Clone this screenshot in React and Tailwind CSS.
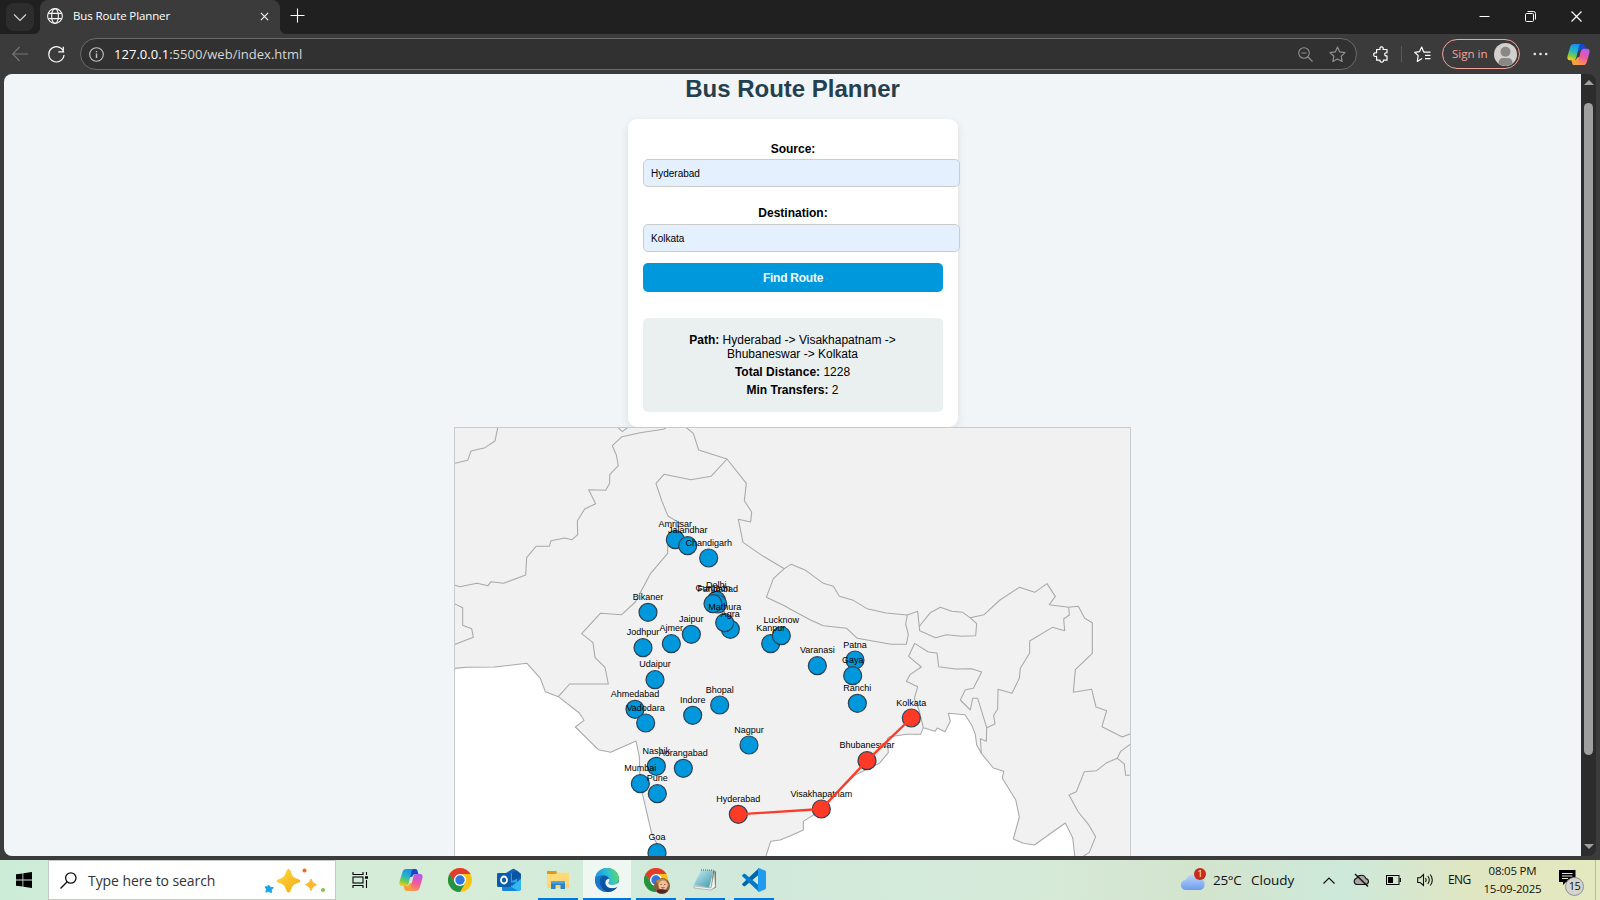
import React from "react";

const UI = "font-['Open_Sans','Noto_Sans',sans-serif]";

/* Map coordinates are in thirds of a pixel. */
const CITIES = [
  ["Amritsar", 676, -271], ["Jalandhar", 713, -253], ["Chandigarh", 776, -216],
  ["Delhi", 799, -89], ["Faridabad", 803, -78], ["Gurgaon", 789, -79],
  ["Bikaner", 594, -53], ["Agra", 841, -2], ["Mathura", 824, -22], ["Jaipur", 724, 13],
  ["Jodhpur", 579, 53], ["Ajmer", 664, 41], ["Kanpur", 962, 41], ["Lucknow", 994, 17],
  ["Udaipur", 615, 149], ["Ahmedabad", 555, 238], ["Vadodara", 587, 279],
  ["Indore", 728, 256], ["Bhopal", 809, 225], ["Nagpur", 897, 345],
  ["Nashik", 619, 409], ["Aurangabad", 700, 415], ["Mumbai", 571, 461],
  ["Pune", 622, 491], ["Goa", 621, 668], ["Varanasi", 1102, 107],
  ["Patna", 1215, 90], ["Gaya", 1208, 137], ["Ranchi", 1222, 220],
  ["Hyderabad", 865, 553, true], ["Visakhapatnam", 1114, 537, true],
  ["Bhubaneswar", 1251, 392, true], ["Kolkata", 1384, 264, true],
];

const NORTH_WEST = [
  "143,24 135,63 105,83 63,93 53,121 15,130",
  "503,22 517,35 534,22",
  "650,22 640,28 570,38 516,50 487,77 499,105 505,137 479,164 479,190 467,211 416,209 437,251 404,267 382,303 383,344 366,359 344,354 303,362 298,379 258,379 230,413 227,465 161,490 123,485 114,497 81,490 29,500 13,495",
  "708,22 730,40 746,90 831,117 889,190 883,242 905,276 902,306 865,298 879,367 940,409 1003,446 1023,433 1067,451 1120,490 1150,499 1168,529 1210,541 1251,566 1309,579 1372,585 1367,612 1375,644 1369,673 1323,673 1222,655 1190,625 1120,617 1080,599 1020,567 1005,558 949,532 970,476 1003,446",
  "831,117 783,169 723,179 642,163 618,190 635,242 654,288 690,310 660,350 653,375 653,400 602,460 556,546 515,584 451,580 395,641 429,668 435,712 465,742 475,792 359,792 325,830",
  "13,551 38,563 38,616 65,626 70,652 13,674",
];

const NORTH_EAST = [
  "352,585 383,574 389,632 437,653 470,644 515,649 557,647 560,611 540,593 518,577 485,574 451,562 421,578 389,618",
  "540,593 582,584 630,540 688,502 734,517 771,491 796,529 778,554 836,562 865,559 884,595 907,608 907,700 856,749 850,817 905,808 918,861 950,872 936,920 997,951 1024,940",
  "836,562 838,585 821,597 824,632 787,622 719,663 719,699 691,745 688,775 666,820 624,808 623,867 611,886 615,912 590,923 563,835 548,835 541,870 511,840 526,809 550,805 575,756 545,746 497,747 446,740 441,699 415,696 374,670 356,709 394,741 361,763 349,784 383,800 373,835 388,873 400,923",
  "590,923 589,964 571,956 574,1000",
  "1024,970 992,994 982,1015 1003,1032 1007,1066 1024,1066",
  "982,1015 950,1028 920,1052 883,1055 859,1115 837,1125 865,1176 895,1213 917,1250 898,1297 875,1312",
];

const WEST_SEA =
  "M5,116 L50,112 133,111 231,100 271,145 286,185 325,200 388,249 402,271 376,291 445,359 482,367 558,333 568,380 570,450 577,490 605,610 625,650 630,700 5,700 Z";
const EAST_SEA =
  "M-79,700 L-72,678 -58,634 -30,630 0,618 40,600 40,574 94,540 140,490 194,436 268,400 295,368 292,325 299,320 350,313 392,313 400,293 435,304 442,294 465,305 481,274 475,250 525,254 545,285 556,313 560,345 574,370 610,414 641,424 637,445 677,509 688,561 670,627 700,640 733,645 826,579 848,623 857,700 Z";

function RouteMap() {
  return (
    <svg className="block h-[429px] w-[675px]" viewBox="0 0 2025 1287">
      <rect width="2025" height="1287" fill="#f1f1f1" />
      <g fill="none" stroke="#a9a9a9" strokeWidth="3.2" strokeLinejoin="round">
        <path d={WEST_SEA} fill="#fff" transform="translate(-15 606)" />
        <path d={EAST_SEA} fill="#fff" transform="translate(1005 606)" />
        <g transform="translate(-15 -24)">
          {NORTH_WEST.map((p) => <polyline key={p} points={p} />)}
        </g>
        <g transform="translate(1005 -24)">
          {NORTH_EAST.map((p) => <polyline key={p} points={p} />)}
        </g>
      </g>
      <g transform="translate(-15 606)">
        {CITIES.map(([name, x, y, hit]) => (
          <circle key={name} cx={x} cy={y} r="27" fill={hit ? "#ff3b27" : "#0098dc"} stroke="#2c4356" strokeWidth="3.6" />
        ))}
        {CITIES.map(([name, x, y]) => (
          <text key={name} x={x} y={y - 37} fontSize="27" textAnchor="middle" fill="#000" className="font-['Liberation_Sans',Arial,sans-serif]">
            {name}
          </text>
        ))}
        <polyline points="865,553 1114,537 1251,392 1384,264" fill="none" stroke="#ff3b27" strokeWidth="7" />
      </g>
    </svg>
  );
}

function Copilot({ className, id }) {
  return (
    <svg className={className} viewBox="0 0 24 24">
      <defs>
        <linearGradient id={id + "a"} x1="0.6" y1="0" x2="0.3" y2="1">
          <stop offset="0" stopColor="#1b8df0" /><stop offset="0.45" stopColor="#25b7c4" />
          <stop offset="0.75" stopColor="#7cc84a" /><stop offset="1" stopColor="#f6cf1e" />
        </linearGradient>
        <linearGradient id={id + "b"} x1="0.6" y1="0" x2="0.3" y2="1">
          <stop offset="0" stopColor="#b45cf0" /><stop offset="0.5" stopColor="#f2589a" />
          <stop offset="1" stopColor="#ff9a4d" />
        </linearGradient>
      </defs>
      <path d="M11 1h5.200c1.400 0 2 .8 2.400 2l.9 3.300h-3.200c-1.600 0-2.300.8-2.800 2.300l-3 1z" fill="#1648c8" />
      <path d="M13 23H7.800c-1.400 0-2-.8-2.400-2l-.9-3.300h3.200c1.600 0 2.300-.8 2.800-2.300l3-1z" fill="#f9a03c" />
      <path d="M7.500 1H15c-1.500 0-2.100 1.200-2.500 2.600L9.800 14.800C9.200 17 8.200 18 6.400 18H3c-2.500 0-3-2-2.400-4.500L3.400 4C4 2 5.200 1 7.500 1z" fill={`url(#${id}a)`} />
      <path d="M16.500 23H9c1.500 0 2.100-1.200 2.500-2.600l2.700-11.200C14.800 7 15.800 6 17.600 6H21c2.500 0 3 2 2.400 4.500L20.600 20c-.6 2-1.800 3-4.100 3z" fill={`url(#${id}b)`} />
    </svg>
  );
}

function Chrome({ className }) {
  return (
    <svg className={className} viewBox="0 0 24 24">
      <circle cx="12" cy="12" r="12" fill="#fbc116" />
      <path d="M1.600 6A12 12 0 0 1 22.400 6H12z" fill="#e33b2e" />
      <path d="M1.600 6A12 12 0 0 0 12 24l5.200-9H6.800z" fill="#229342" />
      <path d="M1.600 6L6.800 15 12 12V6z" fill="#229342" />
      <path d="M1.600 6L3 4.500h18L22.400 6H12a6 6 0 0 0-5.500 4L6 13z" fill="#e33b2e" />
      <circle cx="12" cy="12" r="6" fill="#fff" />
      <circle cx="12" cy="12" r="4.700" fill="#2f76e4" />
    </svg>
  );
}

function TabStrip() {
  return (
    <div className="flex h-[34px] shrink-0 bg-[#202020] text-white">
      <div className="ml-1.5 mt-[3px] flex h-7 w-7 items-center justify-center rounded-lg bg-[#2d2d2d]">
        <svg className="h-3.5 w-3.5" viewBox="0 0 14 14" fill="none" stroke="#d8d8d8" strokeWidth="1.1"><path d="M1 4.500l6 6 6-6" /></svg>
      </div>
      <div className="flex w-[6px] items-end">
        <svg className="h-1.5 w-1.5" viewBox="0 0 6 6"><path d="M0 6A6 6 0 0 0 6 0V6z" fill="#3b3b3b" /></svg>
      </div>
      <div className="flex w-[240px] items-center rounded-t-lg bg-[#3b3b3b] pb-[2px] pl-[7px]">
        <svg className="h-4 w-4" viewBox="0 0 16 16" fill="none" stroke="#f5f5f5" strokeWidth="1.1">
          <circle cx="8" cy="8" r="7.400" /><ellipse cx="8" cy="8" rx="3.400" ry="7.400" /><path d="M1.300 5.400h13.400M1.300 10.600h13.400" />
        </svg>
        <span className={`${UI} ml-[10px] w-[180px] whitespace-nowrap text-[11.500px] tracking-[-0.120px]`}>Bus Route Planner</span>
        <svg className="ml-[7px] h-[9px] w-[9px]" viewBox="0 0 10 10" fill="none" stroke="#f0f0f0" strokeWidth="1.300"><path d="M1 1l8 8M9 1L1 9" /></svg>
      </div>
      <div className="flex w-[10px] items-end">
        <svg className="h-1.5 w-1.5" viewBox="0 0 6 6"><path d="M6 6A6 6 0 0 1 0 0V6z" fill="#3b3b3b" /></svg>
      </div>
      <svg className="mt-2 h-[15px] w-[15px]" viewBox="0 0 15 15" fill="none" stroke="#fff" strokeWidth="1.100"><path d="M7.500 .5v14M.5 7.500h14" /></svg>
      <div className="ml-auto flex items-center pb-px pr-[18px]">
        <svg className="h-[11px] w-[11px]" viewBox="0 0 11 11"><path d="M.5 5.500h10" stroke="#fff" /></svg>
        <svg className="ml-[35px] h-[11px] w-[11px]" viewBox="0 0 11 11" fill="none" stroke="#fff"><rect x=".5" y="2.500" width="8" height="8" rx="1" /><path d="M2.500 .5h6q2 0 2 2v6" /></svg>
        <svg className="ml-[35px] h-[11px] w-[11px]" viewBox="0 0 11 11" stroke="#fff" strokeWidth="1.200"><path d="M.5 .5l10 10M10.500 .5l-10 10" /></svg>
      </div>
    </div>
  );
}

const STAR = "M8 1l2.100 4.600 5 .6-3.700 3.400 1 5L8 12.200l-4.400 2.400 1-5L.9 6.200l5-.6z";

function Toolbar() {
  return (
    <div className={`${UI} flex h-10 shrink-0 items-center bg-[#3b3b3b]`}>
      <svg className="ml-3 h-4 w-4" viewBox="0 0 16 16" fill="none" stroke="#777" strokeWidth="1.100"><path d="M16 8H.7M7.500 1L.7 8l6.800 7" /></svg>
      <svg className="ml-5 h-[17px] w-[17px]" viewBox="0 0 17 17" fill="none" stroke="#fff" strokeWidth="1.200"><path d="M15.800 6.500A7.600 7.600 0 1 0 16 9M15.300 .8v5h-5" /></svg>
      <div className="ml-[15px] flex h-8 w-[1277px] items-center rounded-full border border-[#6a6a6a] bg-[#313131]">
        <svg className="ml-2 h-[15px] w-[15px]" viewBox="0 0 15 15" fill="none" stroke="#c4c4c4" strokeWidth="1.100"><circle cx="7.500" cy="7.500" r="6.800" /><path d="M7.500 6.500v4.500M7.500 4v1.300" strokeWidth="1.400" /></svg>
        <span className="ml-[10px] whitespace-nowrap pt-px text-[13px] tracking-[0.030px] text-[#d6d6d6]"><span className="text-white">127.0.0.1</span>:5500/web/index.html</span>
        <svg className="ml-auto h-[15px] w-[15px]" viewBox="0 0 15 15" fill="none" stroke="#909090" strokeWidth="1.100"><circle cx="6" cy="6" r="5.300" /><path d="M10 10l4.500 4.500M3.500 6h5" /></svg>
        <svg className="ml-[16px] mr-[10px] h-[17px] w-[17px]" viewBox="0 0 16 16" fill="none" stroke="#909090" strokeWidth="1.100" strokeLinejoin="round"><path d={STAR} /></svg>
      </div>
      <svg className="ml-[16px] h-[17px] w-[17px]" viewBox="0 0 17 17" fill="none" stroke="#fff" strokeWidth="1.200" strokeLinejoin="round">
        <path d="M4 3.500h3q-.6-2.700 1.500-2.700t1.600 2.700H14v3.300q-2.300-.4-2.300 1.500T14 9.800v4.400h-3.600q.3 2-1.700 2t-1.700-2H3.600v-3.800q-2.900.5-2.900-1.700t2.900-1.900V3.500z" />
      </svg>
      <div className="ml-[11px] h-4 w-px bg-[#5a5a5a]" />
      <svg className="ml-[12px] h-[17px] w-[17px]" viewBox="0 0 17 17" fill="none" stroke="#fff" strokeWidth="1.200" strokeLinejoin="round"><path d="M9.500 6.200H16.500M11 9.400h5.500M11 12.600h5.500M10.500 5.800L9.600 5.700 7.700 1 5.400 5.700.7 6.300 4.200 9.600l-.9 5.800 4.800-2.800" /></svg>
      <div className="ml-[11px] flex h-[30px] w-[78px] items-center rounded-full border border-[#f5a39b] pl-[9px]">
        <span className="w-[37px] whitespace-nowrap text-[11.500px] text-[#f5a39b]">Sign in</span>
        <svg className="ml-[5px] h-[23px] w-[23px] shrink-0" viewBox="0 0 23 23"><circle cx="11.500" cy="11.500" r="11.500" fill="#d2d0ce" /><circle cx="11.500" cy="8.800" r="5" fill="#8a8886" /><path d="M4.500 20.500q0-5.500 5-5.500h4q5 0 5 5.500a11.500 11.500 0 0 1-14 0z" fill="#8a8886" /></svg>
      </div>
      <svg className="ml-[13px] h-3 w-[15px]" viewBox="0 0 15 12" fill="#e6e6e6"><circle cx="1.800" cy="6" r="1.300" /><circle cx="7.500" cy="6" r="1.300" /><circle cx="13.200" cy="6" r="1.300" /></svg>
      <Copilot id="tb" className="ml-[19px] h-[23px] w-[23px]" />
    </div>
  );
}

function Field({ label, value, className }) {
  return (
    <div className={className}>
      <div className="h-[14px] text-center font-bold leading-[14px]">{label}</div>
      <div className="flex h-7 w-[317px] items-center rounded-[5px] border border-[#ccc] bg-[#e4f0fe] px-[7px] pt-px text-[10px]">{value}</div>
    </div>
  );
}

function Page() {
  return (
    <div className="flex h-[782px] flex-1 flex-col items-center overflow-hidden rounded-l-lg bg-[#f1f5f8] pl-px font-['Liberation_Sans',Arial,sans-serif] text-[12px] leading-[14px] text-black">
      <h1 className="mr-px mt-px h-[28px] text-[24px] font-bold leading-[28px] text-[#24404f]">Bus Route Planner</h1>
      <div className="mt-4 h-[308px] w-[330px] shrink-0 rounded-[9px] bg-white px-[15px] shadow-[0_3px_8px_rgba(0,0,0,0.1)]">
        <Field label="Source:" value="Hyderabad" className="flex flex-col gap-[3px] pt-[23px]" />
        <Field label="Destination:" value="Kolkata" className="flex flex-col gap-[4px] pt-[19px]" />
        <div className="mt-[11px] flex h-[29px] items-center justify-center rounded-[5px] bg-[#0098dc] font-bold tracking-[-0.250px] text-[#f1f9fd]">Find Route</div>
        <div className="mt-[26px] h-[94px] rounded-[5px] bg-[#eaf0f0] pl-[15px] pr-[16px] pt-[15px] text-center">
          <p><b>Path:</b> Hyderabad -&gt; Visakhapatnam -&gt; Bhubaneswar -&gt; Kolkata</p>
          <p className="mt-[4px]"><b>Total Distance:</b> 1228</p>
          <p className="mt-[4px]"><b>Min Transfers:</b> 2</p>
        </div>
      </div>
      <div className="z-10 mr-px w-[677px] shrink-0 border border-b-0 border-[#c8cbcd]"><RouteMap /></div>
    </div>
  );
}

function Scrollbar() {
  return (
    <div className="flex h-[782px] w-[15px] flex-col items-center rounded-r-lg bg-[#2c2c2c]">
      <svg className="mt-[6px] h-[5px] w-[10px]" viewBox="0 0 10 5"><path d="M0 5L5 0l5 5z" fill="#a0a0a0" /></svg>
      <div className="mt-[18px] h-[652px] w-[9px] rounded-full bg-[#9f9f9f]" />
      <svg className="mb-[7px] mt-auto h-[5px] w-[10px]" viewBox="0 0 10 5"><path d="M0 0l5 5 5-5z" fill="#a0a0a0" /></svg>
    </div>
  );
}

function AppButton({ children, active, open, className = "" }) {
  return (
    <div className={`relative flex h-10 w-12 shrink-0 items-center justify-center ${active ? "bg-[#eff7f3]" : ""} ${className}`}>
      {children}
      {open && <div className={`absolute bottom-0 h-[2px] bg-[#0078d7] ${active ? "w-12" : "w-10"}`} />}
    </div>
  );
}

function Taskbar() {
  return (
    <div className={`${UI} flex h-10 shrink-0 items-center bg-[linear-gradient(90deg,#cdecd7_0%,#d6edd8_28%,#d0e9dc_45%,#d6ead8_65%,#d3e4cd_75%,#cde9da_84%,#e0e6c2_92%,#e5e9bf_100%)] text-[#111]`}>
      <svg className="ml-4 h-4 w-4" viewBox="0 0 16 16" fill="#000"><path d="M0 2.300l6.500-.9v6.200H0zM7.300 1.300L16 0v7.600H7.300zM0 8.400h6.500v6.200L0 13.700zM7.300 8.400H16V16l-8.700-1.200z" /></svg>
      <div className="ml-4 flex h-10 w-[288px] items-center border border-[#c4cbc6] bg-white">
        <svg className="ml-[11px] h-[17px] w-[17px]" viewBox="0 0 17 17" fill="none" stroke="#111" strokeWidth="1.300"><circle cx="10.800" cy="6" r="5.200" /><path d="M7.200 9.800L.5 16.500" /></svg>
        <span className="ml-[11px] w-[133px] whitespace-nowrap text-[14px] tracking-[-0.080px] text-[#333]">Type here to search</span>
        <svg className="ml-[43px] h-[25px] w-[62px]" viewBox="0 0 62 25">
          <defs><linearGradient id="gold" x1="0" y1="0" x2="1" y2="1"><stop stopColor="#ffda3a" /><stop offset="1" stopColor="#f5a81a" /></linearGradient></defs>
          <path d="M24.500 1q1.800 0 2.800 4 1.200 4.300 5 5.500 4 1.200 4 2.500t-4 2.500q-3.800 1.200-5 5.500-1 3.500-2.800 3.500t-2.800-3.500q-1.200-4.300-5-5.500-4-1.200-4-2.500t4-2.500q3.800-1.200 5-5.500 1-4 2.800-4z" fill="url(#gold)" />
          <path d="M47 11q1 4.500 5.500 5.700Q48 18 47 22.500 46 18 41.500 16.700 46 15.500 47 11z" fill="#f9b92b" stroke="#f9b92b" strokeLinejoin="round" />
          <path d="M4.500 17l1.800 2.200 3 .5-2.100 2 .2 3-2.700-1.400-2.900.8.800-2.800-1.600-2.400 3-.2z" fill="#16a5e8" stroke="#16a5e8" strokeLinejoin="round" />
          <circle cx="40.500" cy="2.500" r="2" fill="#f2662b" /><circle cx="59" cy="22" r="2" fill="#83c441" />
        </svg>
      </div>
      <svg className="ml-4 h-4 w-[17px]" viewBox="0 0 17 16" fill="none" stroke="#000" strokeWidth="1.100"><path d="M1 0v2.500h10V0M1 16v-2.500h10V16M14.500 0v3M14.500 8v8" /><rect x="1" y="5" width="10" height="6" /><path d="M13 5.500h3" strokeWidth="2.500" /></svg>

      <AppButton className="ml-[18px]"><Copilot id="tk" className="h-6 w-6" /></AppButton>
      <AppButton className="ml-[1px]"><Chrome className="h-6 w-6" /></AppButton>
      <AppButton className="ml-[1px]">
        <svg className="h-6 w-6" viewBox="0 0 24 24">
          <path d="M5 7.500L15.500 1q1-.5 2 0L24 6v14q0 3-3 3H7q-2 0-2-2z" fill="#1066b5" /><path d="M9 5.500h11v9H9z" fill="#28a8ea" /><path d="M15 5l5-2.500L24 6v3l-9 4z" fill="#0d53a3" />
          <path d="M5 13l10 5 9-7v9q0 3-3 3H7q-2 0-2-2z" fill="#35b8f1" /><path d="M5 13l16 10H7q-2 0-2-2z" fill="#1686d3" />
          <rect y="5" width="14" height="14" rx="1.200" fill="#0a5cad" /><ellipse cx="7" cy="12" rx="3" ry="3.500" fill="none" stroke="#fff" strokeWidth="1.800" />
        </svg>
      </AppButton>
      <AppButton open className="ml-[1px]">
        <svg className="h-6 w-6" viewBox="0 0 24 24"><path d="M1 3h9l2 2h11v15H1z" fill="#ffd56b" /><path d="M1 3h9l1 1-1 2H1z" fill="#d99a16" /><path d="M1 6h10l2-1.300h10V16H1z" fill="#ffd975" /><path d="M5 13h14v8h-4.500v-4h-5v4H5z" fill="#2e82c6" /><path d="M5 13h14v2.500H5z" fill="#4ca6e6" /></svg>
      </AppButton>
      <AppButton open active className="ml-[1px]">
        <svg className="h-6 w-6" viewBox="0 0 24 24">
          <defs><linearGradient id="edge" x1="0" y1=".5" x2="1" y2=".3"><stop stopColor="#1595dc" /><stop offset=".55" stopColor="#2bc0d4" /><stop offset="1" stopColor="#62d957" /></linearGradient></defs>
          <circle cx="12" cy="12" r="12" fill="#0c5cad" />
          <path d="M0 11.500C.5 4.500 6 0 12 0c7 0 12 5 12 10.500 0 4-3 6.500-6.500 6.500-3 0-4-1.200-4-2s1-1.200 1-3c0-2.500-2.500-4.500-6-4.500C4.500 7.500 1.500 9 0 11.500z" fill="url(#edge)" />
          <path d="M0 11.500C1.500 9 4.500 7.500 8.500 7.500c-4 1-4 6-3.500 8 1 5 5 8 8.500 8.400C6 25 0 19 0 11.500z" fill="#1b78d0" />
          <path d="M14.400 11c.3 2-1 3-1 4 0 .8 1.200 2 4 2 2 0 4.500-.8 6.200-3l.4 3-2 2.700c-2.400 1.200-6 1.300-8.400-.2-3.600-2-4.200-6-1.600-8 .8-.6 1.900-.9 2.400-.5z" fill="#eff7f3" />
          <path d="M9.500 11.500c-1.500 3.500.5 7.500 4.500 8.500 3 .8 6 .2 8.500-1.200C20.500 22 17 24 13.500 24 9 23 6.500 19.500 6.500 16c0-2 1.200-4 3-4.500z" fill="#0c4f9f" />
        </svg>
      </AppButton>
      <AppButton open className="ml-[1px]">
        <div className="relative h-6 w-6">
          <Chrome className="h-6 w-6" />
          <svg className="absolute left-[10px] top-[10px] h-4 w-4" viewBox="0 0 16 16"><circle cx="8" cy="8" r="8" fill="#8d5b36" /><path d="M2 3q5-4 10-1l3 5-3 3-7-2z" fill="#b98b4e" /><ellipse cx="9" cy="7.500" rx="4.500" ry="5" fill="#f0bfa0" /><path d="M3 12l5-1 6 1.500A8 8 0 0 1 3 14z" fill="#54251e" /><path d="M6.500 6.500h1.300M10 6.500h1.300M7.500 9.500q1.500 1 3 0" stroke="#693329" strokeWidth=".8" fill="none" /></svg>
        </div>
      </AppButton>
      <AppButton open className="ml-[1px]">
        <svg className="h-6 w-6" viewBox="0 0 24 24"><defs><linearGradient id="note" x1="0" y1="0" x2="1" y2="1"><stop stopColor="#c9eef5" /><stop offset="1" stopColor="#3c97a8" /></linearGradient></defs><path d="M20 2.500l3 1v16l-5 2.500z" fill="#7d7466" /><path d="M1 18l17 2 3.500-17.500.8 16.500-4.300 3L1 20z" fill="#f4f3ee" stroke="#888" strokeWidth=".5" /><path d="M8 2.500l12.500.3L16 19.500.8 17z" fill="url(#note)" /><path d="M8 2l12.500.3" stroke="#777" strokeDasharray="1 1" strokeWidth="1.500" /></svg>
      </AppButton>
      <AppButton open className="ml-[1px]">
        <svg className="h-6 w-6" viewBox="0 0 24 24"><path d="M17 0v6.500L3 18.200l-1.200.1L.2 16.800q-.4-.6.100-1.100L17 0z" fill="#0065a9" /><path d="M17 24v-6.500L3 5.800l-1.200-.1L.2 7.200q-.4.600.1 1.100L17 24z" fill="#007acc" /><path d="M17 0l6 2.600q1 .5 1 1.400v16q0 .9-1 1.400L17 24q-1 0-1-1.200V1.200Q16 0 17 0z" fill="#1f9cf0" /></svg>
      </AppButton>

      <div className="ml-auto flex items-center">
        <div className="relative h-[22px] w-[26px]">
          <svg className="h-[22px] w-[26px]" viewBox="0 0 26 22"><defs><linearGradient id="cloud" x1="0" y1="0" x2="0" y2="1"><stop stopColor="#bcd5fb" /><stop offset="1" stopColor="#6d9cec" /></linearGradient></defs><path d="M5 21a5 5 0 0 1-.3-10A8 8 0 0 1 19 9.500 6 6 0 0 1 19.500 21z" fill="url(#cloud)" /></svg>
          <span className="absolute right-[1px] top-[-1px] flex h-3 w-3 items-center justify-center rounded-full bg-[#c62b1c] text-[9px] text-white">1</span>
        </div>
        <span className="ml-[6px] w-[29px] whitespace-nowrap text-[13.500px] tracking-[-0.300px]">25°C</span>
        <span className="ml-[9px] w-[43px] whitespace-nowrap text-[13.500px]">Cloudy</span>
        <svg className="ml-[29px] h-[7px] w-3" viewBox="0 0 12 7" fill="none" stroke="#111" strokeWidth="1.200"><path d="M.5 6.500L6 1l5.500 5.500" /></svg>
        <svg className="ml-[18px] h-[14px] w-[17px]" viewBox="0 0 17 14" stroke="#111"><path d="M4 11.500a3.200 3.200 0 0 1-.3-6.300 5 5 0 0 1 9.300.4 3 3 0 0 1 0 5.900z" fill="#aaa5a5" strokeWidth="1.100" /><path d="M2 1l13 12.500" strokeWidth="1.400" /></svg>
        <svg className="ml-[16px] h-[10px] w-[15px]" viewBox="0 0 15 10" fill="none" stroke="#000"><rect x=".5" y=".5" width="12.500" height="9" /><path d="M14.300 3v4" strokeWidth="1.200" /><rect x="2.500" y="2.500" width="4" height="5" fill="#000" /></svg>
        <svg className="ml-[16px] h-[14px] w-[17px]" viewBox="0 0 17 14" fill="none" stroke="#111" strokeWidth="1.100"><path d="M.7 4.700h2.500L6.500 1.500v11L3.200 9.500H.7zM8.500 5q1.300 2 0 4M10.800 3q3 4 0 8M13.300 1.500q4 5.500 0 11" /></svg>
        <span className="ml-[14px] w-[23px] whitespace-nowrap text-[12px] tracking-[-0.600px]">ENG</span>
        <div className="ml-[12px] w-[59px] whitespace-nowrap text-center text-[11.500px] leading-[18px] tracking-[-0.200px]"><div>08:05 PM</div><div className="-mx-2">15-09-2025</div></div>
        <div className="relative ml-[17px] h-7 w-[26px]">
          <svg className="mt-[4px] h-[15px] w-[17px]" viewBox="0 0 17 15"><path d="M0 0h16.500v12H7l-3 3v-3H0z" fill="#000" /><path d="M3 3.500h10.500M3 6h10.500M3 8.500h6" stroke="#e3e8c2" strokeWidth="1" /></svg>
          <span className="absolute bottom-[-2px] right-[1px] flex h-[19px] w-[19px] items-center justify-center rounded-full border border-[#909090] bg-[#d5d5d0] text-[11px] tracking-[-0.500px]">15</span>
        </div>
        <div className="ml-[10px] h-10 w-px bg-[#b8bda0]" />
        <div className="w-1" />
      </div>
    </div>
  );
}

export default function App() {
  return (
    <div className="flex h-[900px] w-[1600px] flex-col overflow-hidden bg-[#3b3b3b]">
      <TabStrip />
      <Toolbar />
      <div className="flex h-[786px] items-start px-1">
        <Page />
        <Scrollbar />
      </div>
      <Taskbar />
    </div>
  );
}
